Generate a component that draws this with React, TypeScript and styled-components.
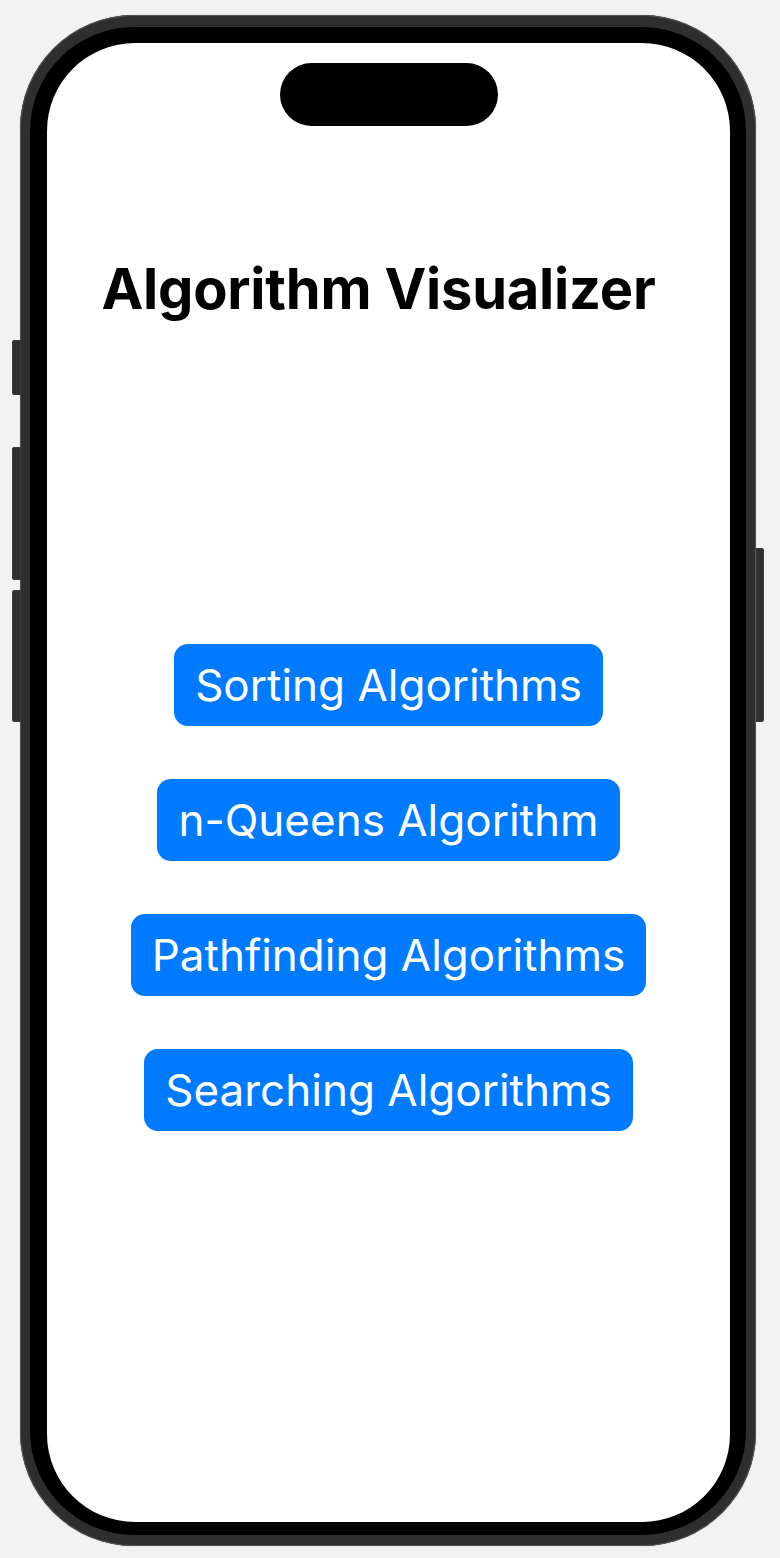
import React from "react";
import styled, { createGlobalStyle } from "styled-components";

const Global = createGlobalStyle`
  html, body { margin: 0; padding: 0; background: #f2f2f2; }
  body { font-family: Inter, "Noto Sans", sans-serif; }
`;

const Stage = styled.div`
  width: 780px;
  height: 1558px;
  padding: 15px 0 0 20px;
  box-sizing: border-box;
  background: #f2f2f2;
`;

const PhoneWrap = styled.div`
  position: relative;
  width: 736px;
  height: 1531px;
`;

const SideButton = styled.div<{ $side: "left" | "right"; $top: number; $height: number }>`
  position: absolute;
  top: ${(p) => p.$top}px;
  height: ${(p) => p.$height}px;
  width: 9px;
  background: #2f2f2f;
  box-shadow: inset 0 0 0 1px #3a3a3a;
  ${(p) =>
    p.$side === "left"
      ? "left: -8px; border-radius: 3px 0 0 3px;"
      : "right: -8px; width: 8px; border-radius: 0 3px 3px 0;"}
`;

const Frame = styled.div`
  width: 100%;
  height: 100%;
  box-sizing: border-box;
  border-radius: 114px;
  background: #2e2e2e;
  box-shadow: inset 0 0 0 1px #555, 0 0 1px #777;
  padding: 12px 10px 11px 10px;
`;

const Bezel = styled.div`
  width: 100%;
  height: 100%;
  box-sizing: border-box;
  border-radius: 104px;
  background: #000;
  padding: 16px 16px 13px 17px;
`;

const Screen = styled.div`
  width: 100%;
  height: 100%;
  box-sizing: border-box;
  border-radius: 88px;
  background: #fff;
  display: flex;
  flex-direction: column;
  align-items: center;
  overflow: hidden;
`;

const Island = styled.div`
  margin-top: 20px;
  width: 218px;
  height: 63px;
  border-radius: 32px;
  background: #000;
  flex-shrink: 0;
`;

const Title = styled.h1`
  margin: 128px 0 0 0;
  padding-right: 20px;
  font-family: Inter, "Noto Sans", sans-serif;
  font-weight: 700;
  font-size: 56px;
  line-height: 70px;
  color: #000;
  letter-spacing: -0.2px;
`;

const ButtonList = styled.div`
  margin-top: 320px;
  display: flex;
  flex-direction: column;
  align-items: center;
  gap: 53px;
`;

const NavButton = styled.button`
  height: 82px;
  padding: 0 21px;
  border: none;
  border-radius: 14px;
  background: #007aff;
  color: #fff;
  font-family: Inter, "Noto Sans", sans-serif;
  font-size: 44px;
  font-weight: 400;
  cursor: pointer;
  white-space: nowrap;
`;

const items = [
  "Sorting Algorithms",
  "n-Queens Algorithm",
  "Pathfinding Algorithms",
  "Searching Algorithms",
];

export default function App() {
  return (
    <>
      <Global />
      <Stage>
        <PhoneWrap>
          <SideButton $side="left" $top={325} $height={55} />
          <SideButton $side="left" $top={432} $height={133} />
          <SideButton $side="left" $top={575} $height={132} />
          <SideButton $side="right" $top={533} $height={174} />
          <Frame>
            <Bezel>
              <Screen>
                <Island />
                <Title>Algorithm Visualizer</Title>
                <ButtonList>
                  {items.map((t) => (
                    <NavButton key={t}>{t}</NavButton>
                  ))}
                </ButtonList>
              </Screen>
            </Bezel>
          </Frame>
        </PhoneWrap>
      </Stage>
    </>
  );
}
